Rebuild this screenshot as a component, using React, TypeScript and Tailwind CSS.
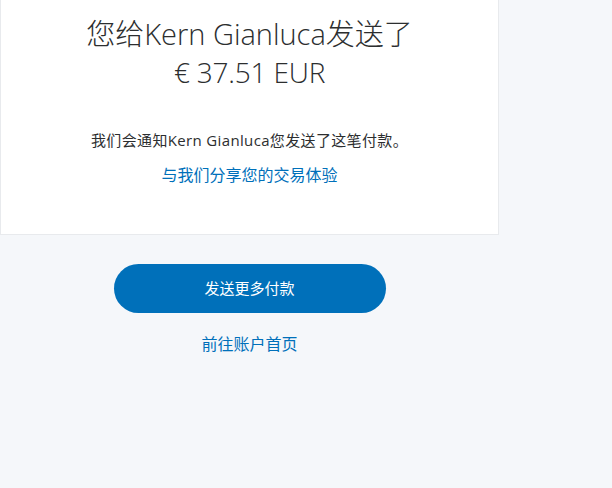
export default function App() {
  return (
    <div
      className="min-h-[488px] w-[612px] bg-[#f5f7fa] text-[#2c2e2f]"
      style={{ fontFamily: '"Open Sans", "Noto Sans CJK SC", sans-serif' }}
    >
      <div className="w-[499px]">
        {/* confirmation card */}
        <div className="flex h-[235px] flex-col items-center border border-t-0 border-[#e8eaed] bg-white pt-[13px]">
          <h1 className="text-[29px] font-light leading-[42px]">您给Kern Gianluca发送了</h1>
          <p className="text-[28px] font-light leading-[34px] tracking-[-0.2px]">€ 37.51 EUR</p>
          <p className="mt-[41px] text-[15px] leading-[20px] tracking-[0.35px]">
            我们会通知Kern Gianluca您发送了这笔付款。
          </p>
          <a href="#" className="mt-[14px] text-[16px] leading-[22px] text-[#0070ba]">
            与我们分享您的交易体验
          </a>
        </div>

        {/* actions */}
        <div className="flex flex-col items-center pt-[29px]">
          <button className="h-[49px] w-[272px] rounded-full bg-[#0070ba] text-[15px] text-white">
            发送更多付款
          </button>
          <a href="#" className="mt-[19px] text-[16px] leading-[24px] text-[#0070ba]">
            前往账户首页
          </a>
        </div>
      </div>
    </div>
  )
}
